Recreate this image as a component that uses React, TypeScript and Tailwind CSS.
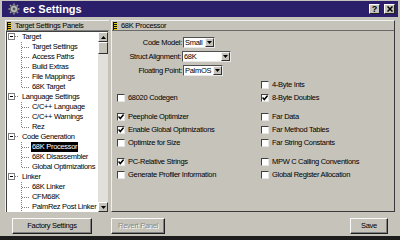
import React from "react";

type Node = { t: string; lvl: 0 | 1; last?: boolean; sel?: boolean };

const tree: Node[] = [
  { t: "Target", lvl: 0 },
  { t: "Target Settings", lvl: 1 },
  { t: "Access Paths", lvl: 1 },
  { t: "Build Extras", lvl: 1 },
  { t: "File Mappings", lvl: 1 },
  { t: "68K Target", lvl: 1, last: true },
  { t: "Language Settings", lvl: 0 },
  { t: "C/C++ Language", lvl: 1 },
  { t: "C/C++ Warnings", lvl: 1 },
  { t: "Rez", lvl: 1, last: true },
  { t: "Code Generation", lvl: 0 },
  { t: "68K Processor", lvl: 1, sel: true },
  { t: "68K Disassembler", lvl: 1 },
  { t: "Global Optimizations", lvl: 1, last: true },
  { t: "Linker", lvl: 0 },
  { t: "68K Linker", lvl: 1 },
  { t: "CFM68K", lvl: 1 },
  { t: "PalmRez Post Linker", lvl: 1 },
];

function Handle() {
  return (
    <svg width="4" height="8" viewBox="0 0 4 8" className="shrink-0">
      <rect x="0" y="0" width="4" height="8" fill="#e8c820" />
      <rect x="0" y="0" width="4" height="1" fill="#111" />
      <rect x="0" y="2" width="4" height="1" fill="#111" />
      <rect x="0" y="4" width="4" height="1" fill="#111" />
      <rect x="0" y="6" width="4" height="1" fill="#111" />
      <rect x="0" y="0" width="1" height="8" fill="#111" />
    </svg>
  );
}

function TreeRow({ n }: { n: Node }) {
  if (n.lvl === 0) {
    return (
      <div className="h-[10px] flex items-center">
        <svg width="15" height="10" viewBox="0 0 15 10" className="shrink-0">
          <rect x="1.5" y="1.5" width="6" height="6" fill="#fff" stroke="#808080" />
          <line x1="3" y1="4.5" x2="6" y2="4.5" stroke="#000" />
          <line x1="8" y1="4.5" x2="12" y2="4.5" stroke="#808080" strokeDasharray="1 1" />
        </svg>
        <span className="leading-[10px] whitespace-nowrap">{n.t}</span>
      </div>
    );
  }
  return (
    <div className="h-[10px] flex items-center">
      <svg width="24" height="10" viewBox="0 0 24 10" className="shrink-0">
        <line x1="14.5" y1="0" x2="14.5" y2={n.last ? 5 : 10} stroke="#808080" strokeDasharray="1 1" />
        <line x1="15" y1="5.5" x2="22" y2="5.5" stroke="#808080" strokeDasharray="1 1" />
      </svg>
      <span
        className={
          "leading-[10px] whitespace-nowrap px-[1px] " +
          (n.sel ? "bg-black text-white" : "")
        }
      >
        {n.t}
      </span>
    </div>
  );
}

function Arrow() {
  return (
    <div className="w-[9px] h-[9px] bg-[#c6c3ba] border border-t-[#f4f4f4] border-l-[#f4f4f4] border-r-[#303030] border-b-[#303030] flex items-center justify-center shrink-0">
      <svg width="5" height="3" viewBox="0 0 5 3">
        <polygon points="0,0 5,0 2.5,3" fill="#000" />
      </svg>
    </div>
  );
}

function Dropdown({ value, w }: { value: string; w: string }) {
  return (
    <div
      className={
        "h-[11px] bg-white border border-t-[#505050] border-l-[#505050] border-r-[#e8e8e8] border-b-[#e8e8e8] flex items-center justify-between pl-[1px] " +
        w
      }
    >
      <span className="leading-[9px] whitespace-nowrap">{value}</span>
      <Arrow />
    </div>
  );
}

function Check({ label, checked }: { label?: string; checked?: boolean }) {
  if (!label) return <div />;
  return (
    <div className="h-[13px] flex items-center gap-[3px]">
      <div className="w-[8px] h-[8px] bg-white border border-t-[#404040] border-l-[#404040] border-r-[#e6e6e6] border-b-[#e6e6e6] flex items-center justify-center shrink-0">
        {checked && (
          <svg width="6" height="6" viewBox="0 0 6 6">
            <path d="M0.5 2.5 L2.3 4.6 L5.6 0.6" stroke="#000" strokeWidth="1.5" fill="none" />
          </svg>
        )}
      </div>
      <span className="leading-[10px] whitespace-nowrap">{label}</span>
    </div>
  );
}

function Button({ label, w, disabled }: { label: string; w: string; disabled?: boolean }) {
  return (
    <div
      className={
        "h-[16px] border border-t-[#fafafa] border-l-[#fafafa] border-r-[#202020] border-b-[#202020] shadow-[inset_-1px_-1px_0_#808080] flex items-center justify-center " +
        w
      }
    >
      <span
        className={
          "leading-[10px] whitespace-nowrap " +
          (disabled ? "text-[#8d8a84] [text-shadow:1px_1px_0_#ffffff]" : "text-black")
        }
      >
        {label}
      </span>
    </div>
  );
}

export default function App() {
  return (
    <div
      className="w-[400px] h-[240px] bg-[#c6c3ba] overflow-hidden flex flex-col text-[7.5px] tracking-[-0.3px] text-black"
      style={{ fontFamily: '"Liberation Sans", Arial, sans-serif' }}
    >
      {/* Title bar */}
      <div className="mt-[1px] mx-[2px] h-[16px] bg-[#2b1f6c] flex items-center shrink-0">
        <svg width="12" height="12" viewBox="0 0 12 12" className="ml-[6px] shrink-0">
          <g stroke="#9a9a9a" strokeWidth="1.6">
            <line x1="6" y1="0.5" x2="6" y2="11.5" />
            <line x1="0.5" y1="6" x2="11.5" y2="6" />
            <line x1="2" y1="2" x2="10" y2="10" />
            <line x1="10" y1="2" x2="2" y2="10" />
          </g>
          <circle cx="6" cy="6" r="3.8" fill="#b8b8b8" stroke="#555" strokeWidth="0.8" />
          <circle cx="6" cy="6" r="1.4" fill="#555" />
        </svg>
        <span className="ml-[3px] text-white text-[11px] tracking-normal font-bold leading-[14px]">ec Settings</span>
        <div className="ml-auto mr-[3px] flex gap-[4px]">
          <div className="w-[11px] h-[10px] bg-[#c6c3ba] border border-t-white border-l-white border-r-[#202020] border-b-[#202020] flex items-center justify-center text-[9px] tracking-normal font-bold leading-[8px]">
            ?
          </div>
          <div className="w-[11px] h-[10px] bg-[#c6c3ba] border border-t-white border-l-white border-r-[#202020] border-b-[#202020] flex items-center justify-center">
            <svg width="6" height="6" viewBox="0 0 6 6">
              <path d="M0.5 0.5 L5.5 5.5 M5.5 0.5 L0.5 5.5" stroke="#000" strokeWidth="1.5" />
            </svg>
          </div>
        </div>
      </div>

      {/* Body */}
      <div className="mt-[3px] ml-[5px] flex gap-[2px] h-[192px] shrink-0">
        {/* Left panel */}
        <div className="w-[104px] h-full flex flex-col border-t border-l border-t-[#f0f0f0] border-l-[#f0f0f0]">
          <div className="h-[10px] flex items-center gap-[4px] pl-[1px] border-b border-b-[#808080]">
            <Handle />
            <span className="leading-[9px] whitespace-nowrap">Target Settings Panels</span>
          </div>
          <div className="flex-1 flex border-t border-l border-t-[#404040] border-l-[#404040] mr-[1px]">
            <div className="flex-1 bg-white overflow-hidden">
              {tree.map((n, i) => (
                <TreeRow key={i} n={n} />
              ))}
            </div>
            <div className="w-[10px] flex flex-col bg-[#e2e0da]">
              <div className="h-[10px] bg-[#c6c3ba] border border-t-white border-l-white border-r-[#303030] border-b-[#303030] flex items-center justify-center">
                <svg width="5" height="3" viewBox="0 0 5 3">
                  <polygon points="0,3 5,3 2.5,0" fill="#000" />
                </svg>
              </div>
              <div className="h-[12px] bg-[#c6c3ba] border border-t-white border-l-white border-r-[#303030] border-b-[#303030]" />
              <div className="flex-1" />
              <div className="h-[10px] bg-[#c6c3ba] border border-t-white border-l-white border-r-[#303030] border-b-[#303030] flex items-center justify-center">
                <svg width="5" height="3" viewBox="0 0 5 3">
                  <polygon points="0,0 5,0 2.5,3" fill="#000" />
                </svg>
              </div>
            </div>
          </div>
        </div>

        {/* Right panel */}
        <div className="w-[284px] h-full flex flex-col border border-t-[#f0f0f0] border-l-[#f0f0f0] border-r-[#3a3a3a] border-b-[#3a3a3a]">
          <div className="h-[10px] flex items-center gap-[4px] pl-[1px] border-b border-b-[#6a6a6a] shrink-0">
            <Handle />
            <span className="leading-[9px] whitespace-nowrap">68K Processor</span>
          </div>
          <div className="flex flex-col gap-[3px] pt-[6px]">
            <div className="flex items-center">
              <span className="w-[71px] text-right pr-[1px] leading-[10px]">Code Model:</span>
              <Dropdown value="Small" w="w-[32px]" />
            </div>
            <div className="flex items-center">
              <span className="w-[70px] text-right pr-[1px] leading-[10px]">Struct Alignment:</span>
              <Dropdown value="68K" w="w-[49px]" />
            </div>
            <div className="flex items-center">
              <span className="w-[71px] text-right pr-[1px] leading-[10px]">Floating Point:</span>
              <Dropdown value="PalmOS" w="w-[40px]" />
            </div>
          </div>
          <div className="mt-[2px] pl-[5px] grid grid-cols-[144px_1fr]">
            <Check />
            <Check label="4-Byte Ints" />
            <Check label="68020 Codegen" />
            <Check label="8-Byte Doubles" checked />
            <div className="h-[6px]" />
            <div className="h-[6px]" />
            <Check label="Peephole Optimizer" checked />
            <Check label="Far Data" />
            <Check label="Enable Global Optimizations" checked />
            <Check label="Far Method Tables" />
            <Check label="Optimize for Size" />
            <Check label="Far String Constants" />
            <div className="h-[6px]" />
            <div className="h-[6px]" />
            <Check label="PC-Relative Strings" checked />
            <Check label="MPW C Calling Conventions" />
            <Check label="Generate Profiler Information" />
            <Check label="Global Register Allocation" />
          </div>
        </div>
      </div>

      {/* Buttons */}
      <div className="mt-[6px] h-[16px] flex pl-[12px] pr-[12px] shrink-0">
        <Button label="Factory Settings" w="w-[80px]" />
        <div className="ml-[19px]">
          <Button label="Revert Panel" w="w-[54px]" disabled />
        </div>
        <div className="ml-auto">
          <Button label="Save" w="w-[38px]" />
        </div>
      </div>

      <div className="mt-[2px] flex-1 bg-[#1c1c1c]" />
    </div>
  );
}
